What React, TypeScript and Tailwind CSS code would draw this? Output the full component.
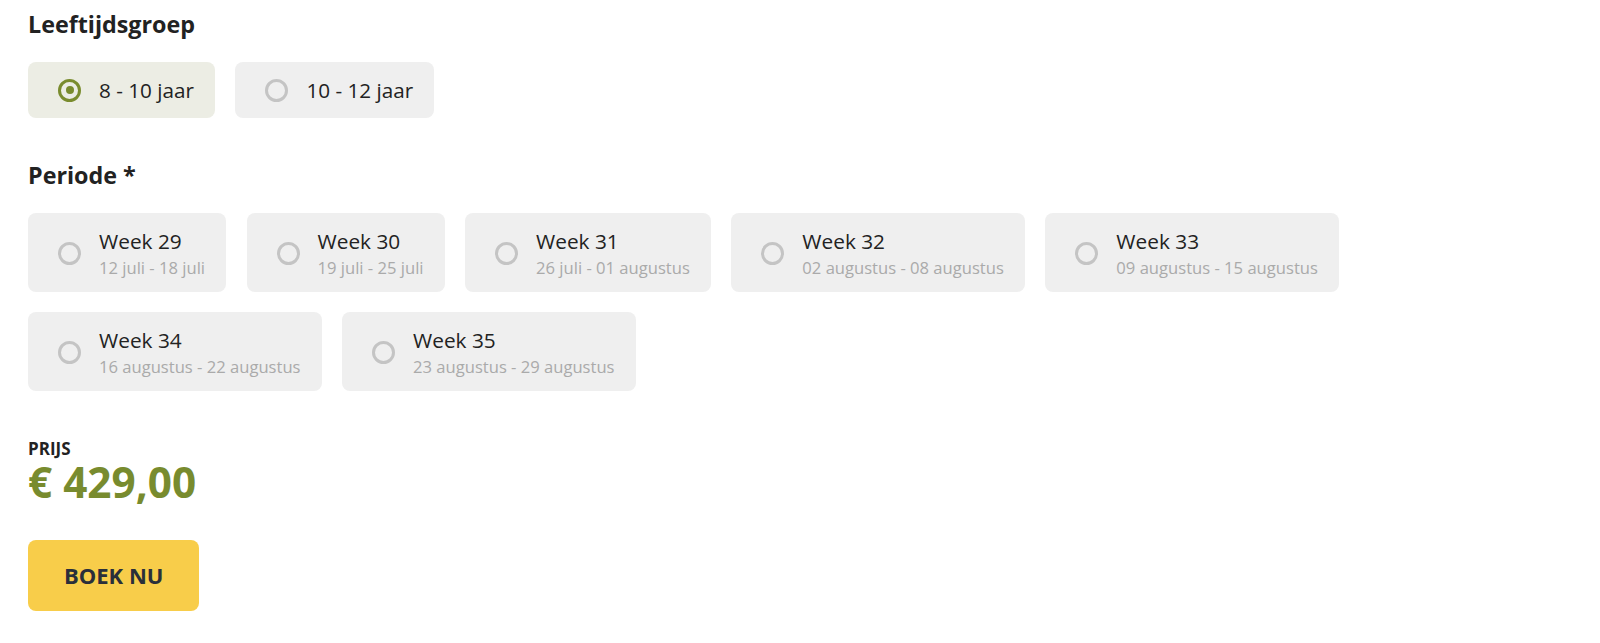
import React from "react";

const font = { fontFamily: '"Open Sans", "Noto Sans", sans-serif' };

function Radio({ checked }: { checked?: boolean }) {
  return checked ? (
    <span className="flex h-[23px] w-[23px] shrink-0 items-center justify-center rounded-full border-[3px] border-[#7a8c2e]">
      <span className="h-[8px] w-[8px] rounded-full bg-[#7a8c2e]" />
    </span>
  ) : (
    <span className="h-[23px] w-[23px] shrink-0 rounded-full border-[3px] border-[#c4c4c4]" />
  );
}

const ages = [
  { label: "8 - 10 jaar", checked: true },
  { label: "10 - 12 jaar", checked: false },
];

const weeks = [
  { w: "Week 29", d: "12 juli - 18 juli" },
  { w: "Week 30", d: "19 juli - 25 juli" },
  { w: "Week 31", d: "26 juli - 01 augustus" },
  { w: "Week 32", d: "02 augustus - 08 augustus" },
  { w: "Week 33", d: "09 augustus - 15 augustus" },
  { w: "Week 34", d: "16 augustus - 22 augustus" },
  { w: "Week 35", d: "23 augustus - 29 augustus" },
];

export default function App() {
  return (
    <div className="min-h-[643px] bg-white pl-[28px] pr-[28px] pt-[9px] text-[#222]" style={font}>
      <h2 className="text-[23.3px] font-bold leading-[30px] text-[#222]">Leeftijdsgroep</h2>
      <div className="mt-[23px] flex gap-[20.5px]">
        {ages.map((a) => (
          <div
            key={a.label}
            className={`flex h-[56px] items-center gap-[18px] rounded-[8px] pl-[30px] pr-[21px] ${
              a.checked ? "bg-[#ecede4]" : "bg-[#efefef]"
            }`}
          >
            <Radio checked={a.checked} />
            <span className="text-[20.7px] leading-[26px] text-[#222]">{a.label}</span>
          </div>
        ))}
      </div>

      <h2 className="mt-[42px] text-[23.3px] font-bold leading-[30px] text-[#222]">Periode *</h2>
      <div className="mt-[23px] flex flex-wrap gap-x-[20.5px] gap-y-[20px]">
        {weeks.map((w) => (
          <div
            key={w.w}
            className="flex items-center gap-[18px] rounded-[8px] bg-[#efefef] pb-[13px] pl-[30px] pr-[21px] pt-[15px]"
          >
            <Radio />
            <div className="flex flex-col">
              <span className="text-[20.8px] leading-[26px] text-[#222]">{w.w}</span>
              <span className="mt-[3px] text-[16.6px] leading-[22px] text-[#aaaaaa]">{w.d}</span>
            </div>
          </div>
        ))}
      </div>

      <div className="mt-[48px] text-[17px] font-bold uppercase leading-[20px] text-[#222]">Prijs</div>
      <div className="text-[42.3px] font-bold leading-[46px] text-[#788b2e]">€ 429,00</div>

      <button className="mt-[35px] flex h-[71px] items-center rounded-[8px] bg-[#f8cd4a] px-[36px] text-[22px] font-bold uppercase text-[#2a2f3a]">
        Boek nu
      </button>
    </div>
  );
}
